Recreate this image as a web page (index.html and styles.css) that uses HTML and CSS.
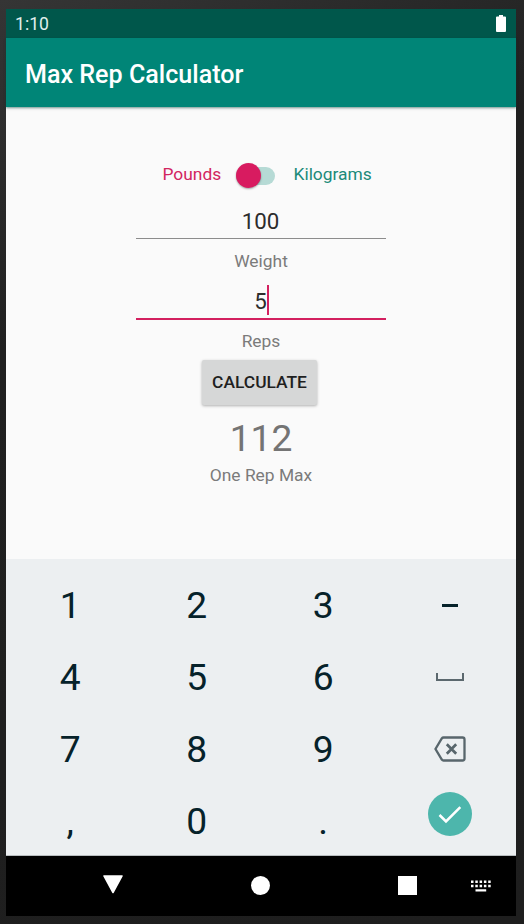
FILE: index.html
```html
<!DOCTYPE html>
<html lang="en">
<head>
<meta charset="utf-8">
<title>Max Rep Calculator</title>
<link rel="stylesheet" href="styles.css">
</head>
<body>
<div class="phone">
  <div class="status">
    <span class="clock">1:10</span>
    <svg class="battery" width="10" height="17" viewBox="0 0 10 17"><path d="M3 0h4v1.5h2q1 0 1 1V16q0 1-1 1H1q-1 0-1-1V2.500q0-1 1-1h2z" fill="#fff"/></svg>
  </div>
  <header class="appbar"><h1 class="title">Max Rep Calculator</h1></header>
  <main class="content">
    <div class="units">
      <span class="pounds">Pounds</span>
      <span class="switch"><span class="thumb"></span></span>
      <span class="kilograms">Kilograms</span>
    </div>
    <div class="field">100</div>
    <div class="label">Weight</div>
    <div class="field field-active">5<span class="cursor"></span></div>
    <div class="label label-reps">Reps</div>
    <button class="calculate">CALCULATE</button>
    <div class="result">112</div>
    <div class="label label-result">One Rep Max</div>
  </main>
  <div class="keyboard">
    <span class="key">1</span><span class="key">2</span><span class="key">3</span><span class="key"><span class="minus"></span></span>
    <span class="key">4</span><span class="key">5</span><span class="key">6</span><span class="key"><span class="space"></span></span>
    <span class="key">7</span><span class="key">8</span><span class="key">9</span>
    <span class="key"><svg class="backspace" width="32" height="26" viewBox="0 0 32 26" fill="none" stroke="#58666c" stroke-width="2.300"><path d="M9.500 1.500H28.500Q30.500 1.500 30.500 3.500V22.500Q30.500 24.500 28.500 24.500H9.500Q8.500 24.500 7.800 23.500L1.500 13L7.800 2.500Q8.500 1.500 9.500 1.500Z"/><path d="M12.800 8.200L22.200 17.800M22.200 8.200L12.800 17.800" stroke-width="2.700"/></svg></span>
    <span class="key">,</span><span class="key">0</span><span class="key">.</span>
    <span class="key"><span class="done"><svg width="44" height="44" viewBox="0 0 44 44" fill="none" stroke="#fff" stroke-width="2.500"><path d="M11.500 23L18 29.500L32.300 15.200"/></svg></span></span>
  </div>
  <nav class="nav">
    <span class="nav-cell nav-back"><svg width="20" height="19" viewBox="0 0 20 19"><path d="M.8.300H19.200Q20.200.300 19.700 1.200L10.800 17.800Q10 18.800 9.200 17.800L.3 1.200Q-.2.300.8.300Z" fill="#fff"/></svg></span>
    <span class="nav-cell nav-home"><span class="home"></span></span>
    <span class="nav-cell nav-recent"><span class="recent"></span></span>
    <span class="nav-cell nav-ime"><svg width="20" height="12" viewBox="0 0 20 12" fill="#fff"><path d="M0 .500h2.500V3H0zM4.300.500h2.500V3H4.300zM8.600.500h2.500V3H8.600zM12.900.500h2.500V3h-2.500zM17.200.500h2.500V3h-2.500zM0 4.700h2.500v2.500H0zM4.300 4.700h2.500v2.500H4.300zM8.600 4.700h2.500v2.500H8.600zM12.900 4.700h2.500v2.500h-2.500zM17.200 4.700h2.500v2.500h-2.500zM4.500 9.200h10.700v2.300H4.500z"/></svg></span>
  </nav>
</div>
</body>
</html>
```
FILE: styles.css
```css
* { box-sizing: border-box; }
body {
  margin: 0;
  height: 924px;
  padding: 9px 8px 8px 6px;
  overflow: hidden;
  background: linear-gradient(155deg, #353535 0, #202020 30%, #1e1e1e 100%);
  font-family: Roboto, "Liberation Sans", sans-serif;
}
.phone {
  width: 510px;
  height: 907px;
  display: flex;
  flex-direction: column;
  background: #fafafa;
}
.status {
  height: 29px;
  padding: 0 10px 0 9px;
  display: flex;
  align-items: center;
  justify-content: space-between;
  background: #00574b;
}
.clock { font-size: 17.6px; line-height: 30px; color: #e0efed; }
.battery { margin-top: -1px; }
.appbar {
  height: 69px;
  padding: 4px 19px 0;
  display: flex;
  align-items: center;
  background: #008577;
  box-shadow: 0 1px 2px rgba(0, 70, 60, .5), 0 2px 4px rgba(0, 0, 0, .06);
}
.title { margin: 0; font-size: 25.1px; font-weight: 500; color: #fff; }
.content {
  height: 452px;
  padding-top: 56px;
  display: flex;
  flex-direction: column;
  align-items: center;
}
.units {
  width: 214px;
  height: 22px;
  margin-left: 17px;
  display: flex;
  align-items: center;
  font-size: 17.4px;
  line-height: 22px;
}
.pounds { flex: none; width: 73px; color: #d2265f; }
.kilograms { margin-left: 19px; color: #1b8a79; }
.switch {
  flex: none;
  width: 39px;
  height: 18px;
  margin-top: 4px;
  border-radius: 9px;
  background: #b6dad5;
}
.thumb {
  display: block;
  width: 25px;
  height: 25px;
  margin: -4px 0 0 0;
  border-radius: 50%;
  background: #d81b60;
  box-shadow: 0 1px 2px rgba(0, 0, 0, .35);
}
.field {
  width: 250px;
  height: 35px;
  margin: 19px 1px 0 0;
  display: flex;
  justify-content: center;
  align-items: center;
  font-size: 22.3px;
  color: #2c2c2c;
  border-bottom: 1.500px solid #8c8c8c;
}
.label {
  height: 22px;
  margin-top: 11px;
  font-size: 17.4px;
  line-height: 22px;
  color: #7b7b7b;
}
.field-active {
  height: 37px;
  margin-top: 11px;
  border-bottom: 2px solid #d3205f;
}
.cursor { width: 2px; height: 30px; margin: -2px -2px 0 0; background: #d3205f; }
.label-reps { margin-top: 10px; }
.calculate {
  width: 115px;
  height: 45px;
  margin: 8px 3px 0 0;
  padding: 0;
  border: 0;
  border-radius: 2px;
  background: #d6d7d7;
  box-shadow: 0 1px 3px rgba(0, 0, 0, .3);
  font: 500 17.4px/45px Roboto, "Liberation Sans", sans-serif;
  color: #1f1f1f;
}
.result {
  height: 44px;
  margin-top: 11px;
  font-size: 37.2px;
  line-height: 44px;
  color: #747474;
}
.label-result { margin-top: 4px; }
.keyboard {
  height: 297px;
  padding: 10px 3px 0 1px;
  display: grid;
  grid-template: repeat(4, 72px) / repeat(4, 1fr);
  background: #eceff1;
  border-bottom: 1px solid #b8bdbf;
  color: #06222a;
  font-size: 37.2px;
}
.key { display: flex; justify-content: center; align-items: center; line-height: 72px; }
.minus { width: 16px; height: 3px; background: #06222a; }
.space { width: 28px; height: 8px; border: 2px solid #5b686e; border-top: 0; }
.done {
  width: 44px;
  height: 44px;
  margin-top: -15px;
  border-radius: 50%;
  background: #4db6ac;
  display: flex;
}
.nav {
  height: 60px;
  display: grid;
  grid-template-columns: 181px 147px 137px 45px;
  background: #000;
}
.nav-cell { display: flex; align-items: center; justify-content: center; padding-bottom: 1px; }
.nav-back { padding: 0 0 3px 33px; }
.home { width: 19px; height: 19px; border-radius: 50%; background: #fff; }
.nav-recent { padding-left: 10px; }
.recent { width: 19px; height: 19px; background: #fff; }
.nav-ime { justify-content: flex-start; }
```
